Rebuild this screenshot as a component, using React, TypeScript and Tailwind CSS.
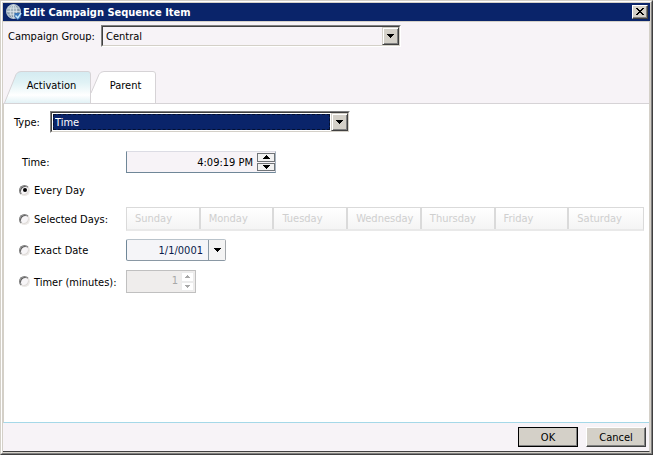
import React, { useState } from 'react';
import clsx from 'clsx';

const days = ['Sunday', 'Monday', 'Tuesday', 'Wednesday', 'Thursday', 'Friday', 'Saturday'];

const Arrow = ({ up = false, small = false }: { up?: boolean; small?: boolean }) => (
  <svg
    width={small ? 5 : 7}
    height={small ? 3 : 4}
    viewBox="0 0 7 4"
    fill="currentColor"
    shapeRendering="crispEdges"
    aria-hidden="true"
  >
    {up ? <path d="M3 0h1v1h1v1h1v1h1v1H0V3h1V2h1V1h1z" /> : <path d="M0 0h7v1H6v1H5v1H4v1H3V3H2V2H1V1H0z" />}
  </svg>
);

const GlobeIcon = () => (
  <svg width="16" height="16" viewBox="0 0 16 16" aria-hidden="true">
    <circle cx="7.5" cy="7.5" r="7.3" fill="#8496a6" />
    <circle cx="6.5" cy="6" r="5" fill="#a3b4c0" />
    <g fill="none" stroke="#dfe8ee" strokeWidth="0.7">
      <circle cx="7.5" cy="7.5" r="6.9" />
      <ellipse cx="7.5" cy="7.5" rx="3.2" ry="6.6" />
      <path d="M7.5 1v13M1 7.5h13M2 4.2h11M2 10.8h11" />
    </g>
    <path d="M8.5 9h7l-1 5-3 2-3-3z" fill="#3a76b8" />
    <path d="M9.5 11.5l2.3 2.3 3.2-4.8" fill="none" stroke="#c3e6fb" strokeWidth="1.5" />
  </svg>
);

interface ComboProps {
  id: string;
  value: string;
  highlighted?: boolean;
}

const Combo = ({ id, value, highlighted = false }: ComboProps) => (
  <div className="relative flex h-[22px] w-[300px] border border-t-[#808080] border-l-[#808080] border-r-white border-b-white">
    <div
      className={clsx(
        'flex flex-1 border border-t-[#404040] border-l-[#404040] border-r-[#d4d0c8] border-b-[#d4d0c8]',
        highlighted ? 'bg-white p-px pr-[18px]' : 'bg-[#f7f3f7]',
      )}
    >
      <select
        id={id}
        defaultValue={value}
        className={clsx(
          'w-full appearance-none outline-none',
          highlighted
            ? 'border border-dashed border-[#04102f] bg-[#0a246a] pl-px text-white'
            : 'pt-px pl-[3px] text-black',
        )}
      >
        <option>{value}</option>
      </select>
    </div>
    <span className="pointer-events-none absolute inset-y-px right-px flex w-[17px] items-center justify-center border border-t-[#d4d0c8] border-l-[#d4d0c8] border-r-[#404040] border-b-[#404040] bg-[#d4d0c8] shadow-[inset_1px_1px_#fff,inset_-1px_-1px_#808080]">
      <Arrow />
    </span>
  </div>
);

interface TabProps {
  label: string;
  active: boolean;
  onClick: () => void;
  wide?: boolean;
}

const Tab = ({ label, active, onClick, wide = false }: TabProps) => (
  <button
    type="button"
    role="tab"
    aria-selected={active}
    onClick={onClick}
    className={clsx('relative h-8 pb-[2px]', wide ? 'w-[87px] pl-2' : 'w-[65px] pl-1')}
  >
    {wide ? (
      <svg className="absolute inset-0" width="87" height="32" viewBox="0 0 87 32" aria-hidden="true">
        <defs>
          <linearGradient id="tabFill" x1="0" y1="0" x2="0" y2="1">
            <stop offset="0" stopColor="#d4ebf1" />
            <stop offset="0.35" stopColor="#e0f2f5" />
            <stop offset="0.75" stopColor="#ffffff" />
            <stop offset="1" stopColor="#e2f2f6" />
          </linearGradient>
        </defs>
        <path d="M0.5 32L12 3.5Q13.5 0.5 17 0.5H84Q86.5 0.5 86.5 3V32" fill="url(#tabFill)" stroke="#d6d3d6" />
      </svg>
    ) : (
      <svg className="absolute inset-0" width="65" height="32" viewBox="0 0 65 32" aria-hidden="true">
        <path d="M0 22L8 3.5Q9.5 0.5 13 0.5H62Q64.5 0.5 64.5 3V32H0V22" fill="#fff" />
        <path d="M0 22L8 3.5Q9.5 0.5 13 0.5H62Q64.5 0.5 64.5 3V32" fill="none" stroke="#d6d3d6" />
      </svg>
    )}
    <span className="relative">{label}</span>
  </button>
);

interface RadioProps {
  label: string;
  value: string;
  mode: string;
  onChange: (value: string) => void;
}

const Radio = ({ label, value, mode, onChange }: RadioProps) => (
  <label className="flex w-[107px] items-center gap-1 whitespace-nowrap">
    <input
      type="radio"
      name="mode"
      value={value}
      checked={mode === value}
      onChange={() => onChange(value)}
      className="grid size-[11px] appearance-none place-items-center rounded-full border border-t-[#808080] border-l-[#808080] border-r-[#ece9e6] border-b-[#ece9e6] bg-[#f7f5f7] shadow-[inset_1px_1px_#606060,inset_-1px_-1px_#dedbd8] checked:before:size-1 checked:before:rounded-full checked:before:bg-black"
    />
    <span className="pt-[2px]">{label}</span>
  </label>
);

const dialogButton =
  'h-5 w-[60px] border border-t-white border-l-white border-r-[#404040] border-b-[#404040] bg-[#d4d0c8] pt-px shadow-[inset_-1px_-1px_#808080]';

const App = () => {
  const [tab, setTab] = useState('activation');
  const [mode, setMode] = useState('every');

  return (
    <main className="flex min-h-screen flex-col border border-t-[#d4d0c8] border-l-[#d4d0c8] border-r-[#404040] border-b-[#404040] bg-[#f7f3f7] font-['DejaVu_Sans_Condensed','DejaVu_Sans',sans-serif] text-[11px] leading-4 text-black">
      <div className="flex flex-1 flex-col border border-t-white border-l-white border-r-[#808080] border-b-[#808080]">
        <div className="flex flex-1 flex-col border border-[#d4d0c8]">
          <header className="flex h-[18px] items-center gap-px bg-[#0a246a] pr-[2px] pl-[3px] text-white">
            <GlobeIcon />
            <h1 className="flex-1 pt-[2px] font-bold">Edit Campaign Sequence Item</h1>
            <button
              type="button"
              aria-label="Close"
              className="flex h-[14px] w-4 items-center justify-center border border-t-white border-l-white border-r-[#404040] border-b-[#404040] bg-[#d4d0c8] pr-px pb-px text-black shadow-[inset_-1px_-1px_#808080]"
            >
              <svg className="shrink-0" width="8" height="7" viewBox="0 0 8 7" shapeRendering="crispEdges" aria-hidden="true">
                <path d="M0 0h2v1h1v1h2V1h1V0h2v1H7v1H6v1H5v1h1v1h1v1h1v1H6V6H5V5H3v1H2v1H0V6h1V5h1V4h1V3H2V2H1V1H0z" />
              </svg>
            </button>
          </header>

          <div className="flex flex-1 flex-col border-t border-r border-[#d4d0c8] border-b border-b-[#404040]">
            <div className="flex items-center gap-[9px] pt-[3px] pl-[5px]">
              <label htmlFor="group" className="w-[84px] pt-[2px] whitespace-nowrap">Campaign Group:</label>
              <Combo id="group" value="Central" />
            </div>

            <div role="tablist" className="mt-6 flex border-b border-[#d6d3d6] pl-px">
              <Tab label="Activation" wide active={tab === 'activation'} onClick={() => setTab('activation')} />
              <Tab label="Parent" active={tab === 'parent'} onClick={() => setTab('parent')} />
            </div>

            <section className="flex-1 border-b border-l border-l-[#d4d0c8] border-b-[#a5d8e8] bg-white pt-[7px] pr-[5px]">
              <div className="flex items-center pl-[10px]">
                <label htmlFor="type" className="w-9 pt-[2px]">Type:</label>
                <Combo id="type" value="Time" highlighted />
              </div>

              <div className="mt-[18px] flex items-center pl-[18px]">
                <label htmlFor="time" className="w-[104px] pt-[2px]">Time:</label>
                <div className="flex h-[22px] w-[150px] border border-t-[#dcdce4] border-l-[#6f8798] border-r-[#a8b4c0] border-b-[#6f8798] bg-[#f7f3f7]">
                  <input
                    id="time"
                    type="text"
                    defaultValue="4:09:19 PM"
                    className="min-w-0 flex-1 pt-[2px] pr-1 text-right outline-none"
                  />
                  <div className="flex w-[18px] flex-col gap-px py-px">
                    <button type="button" aria-label="Later" className="flex flex-1 items-center justify-center border border-[#707478] bg-[#f2f2f2]">
                      <Arrow up />
                    </button>
                    <button type="button" aria-label="Earlier" className="flex flex-1 items-center justify-center border border-[#707478] bg-[#f2f2f2]">
                      <Arrow />
                    </button>
                  </div>
                </div>
              </div>

              <div className="mt-2 flex pl-[15px]">
                <Radio label="Every Day" value="every" mode={mode} onChange={setMode} />
              </div>

              <div className="mt-2 flex items-center pl-[15px]">
                <Radio label="Selected Days:" value="selected" mode={mode} onChange={setMode} />
                <div className="grid h-6 flex-1 grid-cols-7 border border-[#dadada] border-b-2 border-b-[#e9e9e9] bg-gradient-to-b from-white to-[#f4f4f4]">
                  {days.map((day) => (
                    <button
                      key={day}
                      type="button"
                      disabled
                      className="border-r-2 border-[#dadada] pt-px pl-2 text-left text-[#cfcfcf] last:border-r-0"
                    >
                      {day}
                    </button>
                  ))}
                </div>
              </div>

              <div className="mt-2 flex items-center pl-[15px]">
                <Radio label="Exact Date" value="exact" mode={mode} onChange={setMode} />
                <div className="flex h-[22px] w-[100px] rounded-xs border border-t-[#b9c3cb] border-l-[#6f8798] border-r-[#a4a8ac] border-b-[#8a98a4] bg-[#f5f5f8]">
                  <input
                    type="text"
                    aria-label="Date"
                    defaultValue="1/1/0001"
                    className="min-w-0 flex-1 pt-[2px] pr-[5px] text-right text-[#0a1c4c] outline-none"
                  />
                  <button type="button" aria-label="Open calendar" className="flex w-[17px] items-center justify-center border-l border-[#8a98a4] bg-[#f4f4f4]">
                    <Arrow />
                  </button>
                </div>
              </div>

              <div className="mt-[9px] flex items-center pl-[15px]">
                <Radio label="Timer (minutes):" value="timer" mode={mode} onChange={setMode} />
                <div className="flex h-[23px] w-[70px] border border-[#c0c0c0] bg-[#efedec] p-px">
                  <input
                    type="text"
                    aria-label="Minutes"
                    defaultValue="1"
                    disabled
                    className="min-w-0 flex-1 pr-[3px] pb-px text-right text-[#a8a8a8]"
                  />
                  <div className="flex w-[13px] flex-col bg-white text-[#a8a8a8]">
                    <button type="button" disabled aria-label="More" className="flex flex-1 items-center justify-center border border-[#ececec]">
                      <Arrow up small />
                    </button>
                    <button type="button" disabled aria-label="Less" className="flex flex-1 items-center justify-center border border-[#ececec]">
                      <Arrow small />
                    </button>
                  </div>
                </div>
              </div>
            </section>

            <footer className="flex justify-end gap-2 pt-1 pr-[3px] pb-1">
              <button type="button" className={clsx(dialogButton, 'outline outline-black -outline-offset-1')}>OK</button>
              <button type="button" className={dialogButton}>Cancel</button>
            </footer>
          </div>
        </div>
      </div>
    </main>
  );
};

export default App;
